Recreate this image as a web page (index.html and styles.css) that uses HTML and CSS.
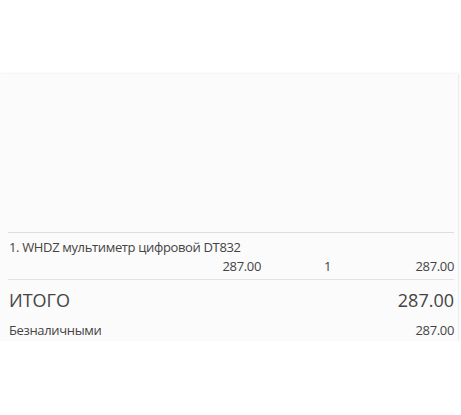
FILE: index.html
```html
<!DOCTYPE html>
<html lang="ru">
<head>
<meta charset="utf-8">
<link rel="stylesheet" href="styles.css">
</head>
<body>
<div class="top"></div>
<div class="receipt">
  <div class="spacer"></div>
  <div class="item">
    <div class="item-name">1. WHDZ мультиметр цифровой DT832</div>
    <div class="item-row">
      <span class="price">287.00</span>
      <span class="qty">1</span>
      <span class="sum">287.00</span>
    </div>
  </div>
  <div class="total">
    <span>ИТОГО</span>
    <span>287.00</span>
  </div>
  <div class="pay">
    <span>Безналичными</span>
    <span>287.00</span>
  </div>
</div>
</body>
</html>
```
FILE: styles.css
```css
html, body { margin: 0; padding: 0; background: #fff; }
body { font-family: "Open Sans", "Noto Sans", sans-serif; color: #444; width: 461px; height: 415px; overflow: hidden; }
.top { height: 74px; }
.receipt {
  width: 459px;
  background: #fbfbfb;
  border-right: 1px solid #ededed;
  box-shadow: 0 -1px 2px rgba(0,0,0,0.05);
  padding: 0 4px 0 8px;
  box-sizing: border-box;
  height: 267px;
}
.spacer { height: 158px; border-bottom: 1px solid #dedede; }
.item { padding: 5px 0 3px 1px; border-bottom: 1px solid #e2e2e2; }
.item-name { font-size: 13px; line-height: 18px; letter-spacing: -0.35px; }
.item-row { display: grid; grid-template-columns: 252px 70px 1fr; font-size: 13px; line-height: 20px; letter-spacing: -0.35px; }
.price { text-align: right; }
.qty { text-align: right; }
.sum { text-align: right; }
.total { display: flex; justify-content: space-between; font-size: 18px; line-height: 40px; padding-left: 1px; }
.pay { display: flex; justify-content: space-between; font-size: 13px; line-height: 20px; padding-left: 1px; letter-spacing: -0.35px; }
```
